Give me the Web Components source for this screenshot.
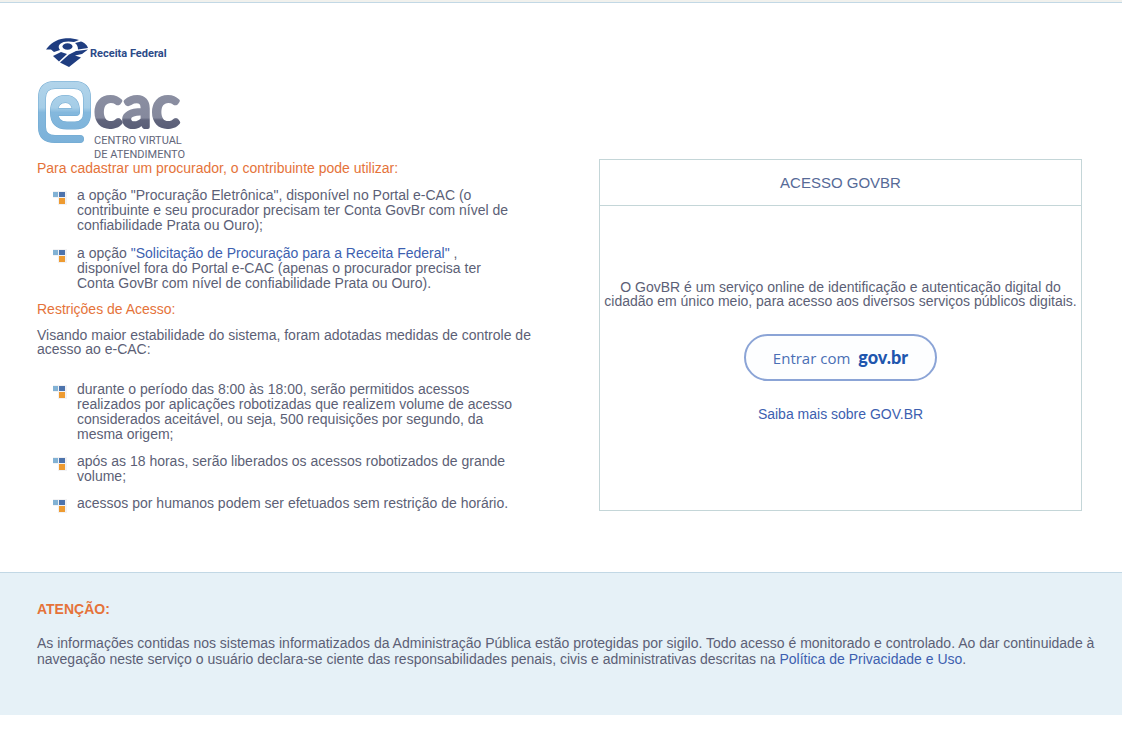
<!DOCTYPE html>
<html lang="pt-BR">
<head>
<meta charset="utf-8">
<title>e-CAC - Centro Virtual de Atendimento</title>
<style>
  body { margin: 0; background: #fff; font: 14px/15px "Liberation Sans", Arial, sans-serif; color: #5c5f76; --link: #3d5fb0; --accent: #e5733a; --line: #c4d6d8; }
</style>
</head>
<body>
<ecac-page></ecac-page>
<script>
const define = (name, html) => customElements.define(name, class extends HTMLElement {
  constructor() {
    super();
    this.attachShadow({ mode: 'open' }).innerHTML = html;
  }
});

define('ecac-logos', `
<style>
  :host { display: flex; flex-direction: column; align-items: flex-start; gap: 12px; }
  svg { display: block; overflow: visible; }
</style>
<svg width="150" height="30" viewBox="37 38 150 30" role="img" aria-label="Receita Federal">
  <g fill="#1f3d80">
    <path d="M46 49.500C50 44 56 39.500 64 38.500C69 38 74 38.500 79 40L74 42C69 41 63 41 60 44C58 46 58.500 48 60 50L54 52L51 49.500Z"/>
    <path d="M75 43L81 41.500C85 42.500 87.500 46 88 48L78 49.500C78 46.500 77 44.500 75 43Z"/>
    <path d="M61 52L67 54L59 61.500L53 56Z"/>
    <path d="M69 54.500L76 51L88 49.500L82 54L75 55.500L81 57.500L69 67L60 62.500Z"/>
    <ellipse cx="67.500" cy="46.500" rx="5" ry="3.200"/>
  </g>
  <text x="90" y="57" font-family="Roboto, sans-serif" font-weight="700" font-size="11" fill="#2c4a88">Receita Federal</text>
</svg>
<svg width="156" height="81" viewBox="37 79 156 81" role="img" aria-label="e-CAC Centro Virtual de Atendimento">
  <defs>
    <linearGradient id="b" x1="0" y1="81" x2="0" y2="142" gradientUnits="userSpaceOnUse"><stop stop-color="#b2d4ea"/><stop offset=".42" stop-color="#a5cde7"/><stop offset=".5" stop-color="#84b8dd"/><stop offset="1" stop-color="#7bb1d9"/></linearGradient>
    <linearGradient id="g" x1="0" y1="93" x2="0" y2="128" gradientUnits="userSpaceOnUse"><stop stop-color="#8b8fa2"/><stop offset=".68" stop-color="#85899d"/><stop offset=".74" stop-color="#60647c"/><stop offset="1" stop-color="#5a5e77"/></linearGradient>
  </defs>
  <g fill="none" stroke-linecap="round" stroke-linejoin="round">
    <path d="M80 138H55Q42 138 42 126V97Q42 84 55 84H74Q87 84 87 97V112Q87 124.500 75 124.500H67Q54 124.500 54 111Q54 98 65.500 98Q76 98 76 111H56" stroke="#70a9d1" stroke-width="8"/>
    <path d="M80 138H55Q42 138 42 126V97Q42 84 55 84H74Q87 84 87 97V112Q87 124.500 75 124.500H67Q54 124.500 54 111Q54 98 65.500 98Q76 98 76 111H56" stroke="url(#b)" stroke-width="7"/>
  </g>
  <text x="94" y="126" font-family="Lato, sans-serif" font-size="59" stroke-linejoin="round" fill="url(#g)" stroke="url(#g)" stroke-width="4">cac</text>
  <g font-family="Roboto, sans-serif" font-size="11" fill="#62667a">
    <text x="94" y="143">CENTRO VIRTUAL</text>
    <text x="94" y="157">DE ATENDIMENTO</text>
  </g>
</svg>`);

define('bullet-item', `
<style>
  :host { display: grid; grid-template-columns: 24px 1fr; }
  svg { display: block; margin: 3px 0 -2px; }
</style>
<svg width="17" height="14" viewBox="0 1 17 14" aria-hidden="true">
  <path d="M0 1H14V15H5V8H0Z" fill="#f2f2f4"/>
  <path d="M0 2H5V7H0Z" fill="#82b2d5"/><path d="M6 2H12V7H6Z" fill="#4d73ac"/><path d="M6 8H12V14H6Z" fill="#ee9b31"/>
</svg>
<div><slot></slot></div>`);

define('access-info', `
<style>
  :host { display: block; }
  h2 { margin: 0; font: inherit; color: var(--accent); }
  p { margin: 11px 0 0; line-height: 14px; }
  ul { list-style: none; margin: 12px 0 11px; padding: 0 20px 0 16px; display: grid; gap: 13px; }
  p + ul { margin: 26px 0 0; gap: 12px; }
  a { color: var(--link); text-decoration: none; }
</style>
<ecac-logos></ecac-logos>
<h2>Para cadastrar um procurador, o contribuinte pode utilizar:</h2>
<ul>
  <li><bullet-item>a opção "Procuração Eletrônica", disponível no Portal e-CAC (o contribuinte e seu procurador precisam ter Conta GovBr com nível de confiabilidade Prata ou Ouro);</bullet-item></li>
  <li><bullet-item>a opção <a href="#">"Solicitação de Procuração para a Receita Federal"</a> , disponível fora do Portal e-CAC (apenas o procurador precisa ter Conta GovBr com nível de confiabilidade Prata ou Ouro).</bullet-item></li>
</ul>
<h2>Restrições de Acesso:</h2>
<p>Visando maior estabilidade do sistema, foram adotadas medidas de controle de acesso ao e-CAC:</p>
<ul>
  <li><bullet-item>durante o período das 8:00 às 18:00, serão permitidos acessos realizados por aplicações robotizadas que realizem volume de acesso considerados aceitável, ou seja, 500 requisições por segundo, da mesma origem;</bullet-item></li>
  <li><bullet-item>após as 18 horas, serão liberados os acessos robotizados de grande volume;</bullet-item></li>
  <li><bullet-item>acessos por humanos podem ser efetuados sem restrição de horário.</bullet-item></li>
</ul>`);

define('govbr-button', `
<style>
  :host { display: block; }
  button { display: flex; align-items: baseline; justify-content: center; gap: 8px; width: 193px; height: 47px; padding: 0; border: 2px solid #8ba4d6; border-radius: 24px; background: #fdfeff; color: #4a6fb5; font: 15px/43px "Open Sans", sans-serif; cursor: pointer; }
  b { font-family: Lato, sans-serif; font-size: 18px; font-weight: 900; color: #1f56ae; }
</style>
<button type="button"><span>Entrar com</span><b>gov.br</b></button>`);

define('login-card', `
<style>
  :host { display: flex; flex-direction: column; box-sizing: border-box; min-height: 352px; border: 1px solid var(--line); text-align: center; }
  h2 { margin: 0; border-bottom: 1px solid var(--line); font: 15px/45px "Liberation Sans", Arial, sans-serif; color: #566a97; }
  .body { flex: 1; display: flex; flex-direction: column; align-items: center; justify-content: center; padding-bottom: 14px; }
  p { margin: 0 0 26px; line-height: 14px; }
  a { margin-top: 26px; color: var(--link); text-decoration: none; }
</style>
<h2>ACESSO GOVBR</h2>
<div class="body">
  <p>O GovBR é um serviço online de identificação e autenticação digital do cidadão em único meio, para acesso aos diversos serviços públicos digitais.</p>
  <govbr-button></govbr-button>
  <a href="#">Saiba mais sobre GOV.BR</a>
</div>`);

define('privacy-notice', `
<style>
  :host { display: block; border-top: 1px solid #c2d8e5; background: #e6f1f7; padding: 28px 20px 48px 37px; line-height: 16px; }
  h2 { margin: 0 0 18px; font-size: 14px; line-height: 16px; color: var(--accent); }
  p { margin: 0; }
  a { color: var(--link); text-decoration: none; }
</style>
<h2>ATENÇÃO:</h2>
<p>As informações contidas nos sistemas informatizados da Administração Pública estão protegidas por sigilo. Todo acesso é monitorado e controlado. Ao dar continuidade à navegação neste serviço o usuário declara-se ciente das responsabilidades penais, civis e administrativas descritas na <a href="#">Política de Privacidade e Uso</a>.</p>`);

define('ecac-page', `
<style>
  :host { display: block; margin-right: 5px; }
  header { height: 2px; background: #f1f1ed; border-bottom: 1px solid #c2d8e5; }
  main { display: grid; grid-template-columns: 500fr 483fr; gap: 62px; align-items: end; padding: 35px 40px 61px 37px; }
</style>
<header></header>
<main><access-info></access-info><login-card></login-card></main>
<privacy-notice></privacy-notice>`);
</script>
</body>
</html>
